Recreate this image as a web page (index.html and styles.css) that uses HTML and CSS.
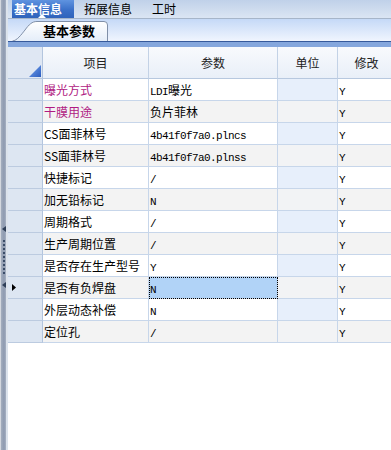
FILE: index.html
```html
<!DOCTYPE html>
<html lang="zh-CN">
<head>
<meta charset="utf-8">
<title>基本参数</title>
<link rel="stylesheet" href="styles.css">
</head>
<body>
<div class="app">
  <aside class="side">
    <span class="arrow"></span>
    <span class="dots"></span>
    <span class="arrow"></span>
  </aside>
  <div class="main">
    <nav class="tabs">
      <div class="tab active">基本信息<i class="caret"></i></div>
      <div class="tab">拓展信息</div>
      <div class="tab">工时</div>
    </nav>
    <div class="subtabs">
      <div class="subtab">
        <svg class="subtab-bg" width="96" height="20" viewBox="0 0 96 20">
          <defs>
            <linearGradient id="stg" x1="0" y1="0" x2="0" y2="1">
              <stop offset="0" stop-color="#ffffff"/>
              <stop offset="1" stop-color="#e4edf9"/>
            </linearGradient>
          </defs>
          <path d="M0.5,20 C5,19.5 9,14 13,9 C17,3.5 20,0.5 25,0.5 L92,0.5 Q95.5,0.5 95.5,4 L95.5,20" fill="url(#stg)" stroke="#7f8fa8" stroke-width="1"/>
        </svg>
        <span class="subtab-label">基本参数</span>
      </div>
    </div>
    <div class="strip"></div>
    <table class="grid">
      <colgroup>
        <col class="c-rh"><col class="c-item"><col class="c-val"><col class="c-unit"><col class="c-mod">
      </colgroup>
      <thead>
        <tr>
          <th class="rh corner"><svg class="corner-tri" width="12" height="12" viewBox="0 0 12 12"><defs><linearGradient id="ctg" x1="0" y1="0" x2="1" y2="1"><stop offset="0" stop-color="#79a6ee"/><stop offset="1" stop-color="#2a5cc0"/></linearGradient></defs><polygon points="12,0 12,12 0,12" fill="url(#ctg)"/></svg></th>
          <th>项目</th>
          <th>参数</th>
          <th>单位</th>
          <th>修改</th>
        </tr>
      </thead>
      <tbody>
        <tr><td class="rh"></td><td class="item hl">曝光方式</td><td class="val"><span class="en">LDI</span>曝光</td><td class="unit"></td><td class="mod"><span class="en">Y</span></td></tr>
        <tr><td class="rh"></td><td class="item hl">干膜用途</td><td class="val">负片菲林</td><td class="unit"></td><td class="mod"><span class="en">Y</span></td></tr>
        <tr><td class="rh"></td><td class="item">CS面菲林号</td><td class="val"><span class="en">4b41f0f7a0.plncs</span></td><td class="unit"></td><td class="mod"><span class="en">Y</span></td></tr>
        <tr><td class="rh"></td><td class="item">SS面菲林号</td><td class="val"><span class="en">4b41f0f7a0.plnss</span></td><td class="unit"></td><td class="mod"><span class="en">Y</span></td></tr>
        <tr><td class="rh"></td><td class="item">快捷标记</td><td class="val"><span class="en">/</span></td><td class="unit"></td><td class="mod"><span class="en">Y</span></td></tr>
        <tr><td class="rh"></td><td class="item">加无铅标记</td><td class="val"><span class="en">N</span></td><td class="unit"></td><td class="mod"><span class="en">Y</span></td></tr>
        <tr><td class="rh"></td><td class="item">周期格式</td><td class="val"><span class="en">/</span></td><td class="unit"></td><td class="mod"><span class="en">Y</span></td></tr>
        <tr><td class="rh"></td><td class="item">生产周期位置</td><td class="val"><span class="en">/</span></td><td class="unit"></td><td class="mod"><span class="en">Y</span></td></tr>
        <tr><td class="rh"></td><td class="item">是否存在生产型号</td><td class="val"><span class="en">Y</span></td><td class="unit"></td><td class="mod"><span class="en">Y</span></td></tr>
        <tr class="current"><td class="rh"><svg class="row-arrow" width="4" height="7" viewBox="0 0 4 7"><polygon points="0,0 4,3.5 0,7" fill="#000"/></svg></td><td class="item">是否有负焊盘</td><td class="val sel"><span class="en">N</span></td><td class="unit"></td><td class="mod"><span class="en">Y</span></td></tr>
        <tr><td class="rh"></td><td class="item">外层动态补偿</td><td class="val"><span class="en">N</span></td><td class="unit"></td><td class="mod"><span class="en">Y</span></td></tr>
        <tr><td class="rh"></td><td class="item">定位孔</td><td class="val"><span class="en">/</span></td><td class="unit"></td><td class="mod"><span class="en">Y</span></td></tr>
      </tbody>
    </table>
  </div>
</div>
</body>
</html>
```

FILE: styles.css
```css
html, body {
  margin: 0;
  padding: 0;
  background: #ffffff;
  overflow: hidden;
}

body {
  font-family: "Noto Sans CJK SC", "Noto Sans CJK JP", sans-serif;
  font-size: 12px;
  color: #000;
}

.app {
  display: flex;
  height: 450px;
}

/* left splitter strip */
.side {
  width: 8px;
  flex: none;
  box-sizing: border-box;
  padding-top: 226px;
  display: flex;
  flex-direction: column;
  align-items: flex-start;
  background: linear-gradient(to right,
    #d3d7de 0, #d3d7de 1px,
    #a4aebe 1px, #8e9ab0 4px, #a7b1c2 6px,
    #dce3ec 6px, #dce3ec 8px);
}

.arrow {
  display: block;
  width: 0;
  height: 0;
  margin-left: 2px;
  border-top: 3px solid transparent;
  border-bottom: 3px solid transparent;
  border-right: 4px solid #2f3f58;
}

.dots {
  display: block;
  width: 2px;
  height: 34px;
  margin: 8px 0 8px 3px;
  background: repeating-linear-gradient(to bottom, #3a4c68 0, #3a4c68 2px, transparent 2px, transparent 4px);
}

.main {
  flex: 1;
  min-width: 0;
  overflow: hidden;
  display: flex;
  flex-direction: column;
  background: #fff;
}

/* top tabs */
.tabs {
  height: 18px;
  display: flex;
  padding-left: 4px;
  background: linear-gradient(#c0d1e9, #dbe5f3);
  border-bottom: 1px solid #a6b5c9;
}

.tab {
  padding: 0 10px;
  line-height: 18px;
  white-space: nowrap;
}

.tab.active {
  position: relative;
  padding: 0 12px 0 2px;
  color: #fff;
  font-weight: bold;
  background: linear-gradient(#5f93e0, #3a70c8 55%, #2f63bb);
}

.caret {
  position: absolute;
  left: 26px;
  bottom: 0;
  width: 0;
  height: 0;
  border-left: 4px solid transparent;
  border-right: 4px solid transparent;
  border-bottom: 4px solid #fff;
}

/* sub tabs */
.subtabs {
  height: 23px;
  box-sizing: border-box;
  padding: 3px 0 0 4px;
  display: flex;
  align-items: flex-end;
  background: linear-gradient(#c5d9f7, #f0f5fe);
  border-bottom: 1px solid #36599a;
}

.subtab {
  position: relative;
  width: 96px;
  height: 20px;
}

.subtab-bg {
  position: absolute;
  left: 0;
  top: 0;
}

.subtab-label {
  position: relative;
  display: block;
  padding-left: 31px;
  line-height: 20px;
  font-size: 13px;
  font-weight: bold;
}

.strip {
  height: 5px;
  background: #85a7dd;
}

/* grid */
.grid {
  border-collapse: separate;
  border-spacing: 0;
  table-layout: fixed;
  width: 388px;
}

.c-rh { width: 35px; }
.c-item { width: 106px; }
.c-val { width: 129px; }
.c-unit { width: 60px; }
.c-mod { width: 58px; }

.grid th {
  height: 32px;
  box-sizing: border-box;
  padding: 0;
  font-weight: normal;
  color: #222;
  text-align: center;
  background: linear-gradient(#f8fafd, #e9eff8);
  border-right: 1px solid #c3d2e6;
  border-bottom: 1px solid #b7c8df;
}

.grid th.corner {
  background: #dfe7f3;
  border-right-color: #b3c5de;
  text-align: right;
  vertical-align: bottom;
  padding: 0 1px 1px 0;
}

.corner-tri {
  display: block;
  margin-left: auto;
}

.grid td {
  height: 22px;
  box-sizing: border-box;
  padding: 0 0 0 1px;
  white-space: nowrap;
  overflow: hidden;
  background: #fff;
  border-right: 1px solid #c7d6ea;
  border-bottom: 1px solid #c7d6ea;
}

.grid tbody tr:nth-child(even) td {
  background: #f3f3f3;
}

.grid td.unit {
  background: #e7effb;
}

.grid tbody tr:nth-child(even) td.unit {
  background: #f2f3f5;
}

.grid td.rh,
.grid tbody tr:nth-child(even) td.rh {
  background: #dde6f2;
  border-right-color: #b3c5de;
  border-bottom-color: #bccbe0;
  padding-left: 4px;
}

.row-arrow {
  display: block;
}

.grid td.hl {
  color: #b01a82;
}

.grid td.sel,
.grid tbody tr:nth-child(even) td.sel {
  background: #b1d3f7;
  outline: 1px dotted #000;
  outline-offset: -1px;
}

.en {
  font-family: "Liberation Mono", "DejaVu Sans Mono", monospace;
  font-size: 11px;
  letter-spacing: -0.6px;
}
```
